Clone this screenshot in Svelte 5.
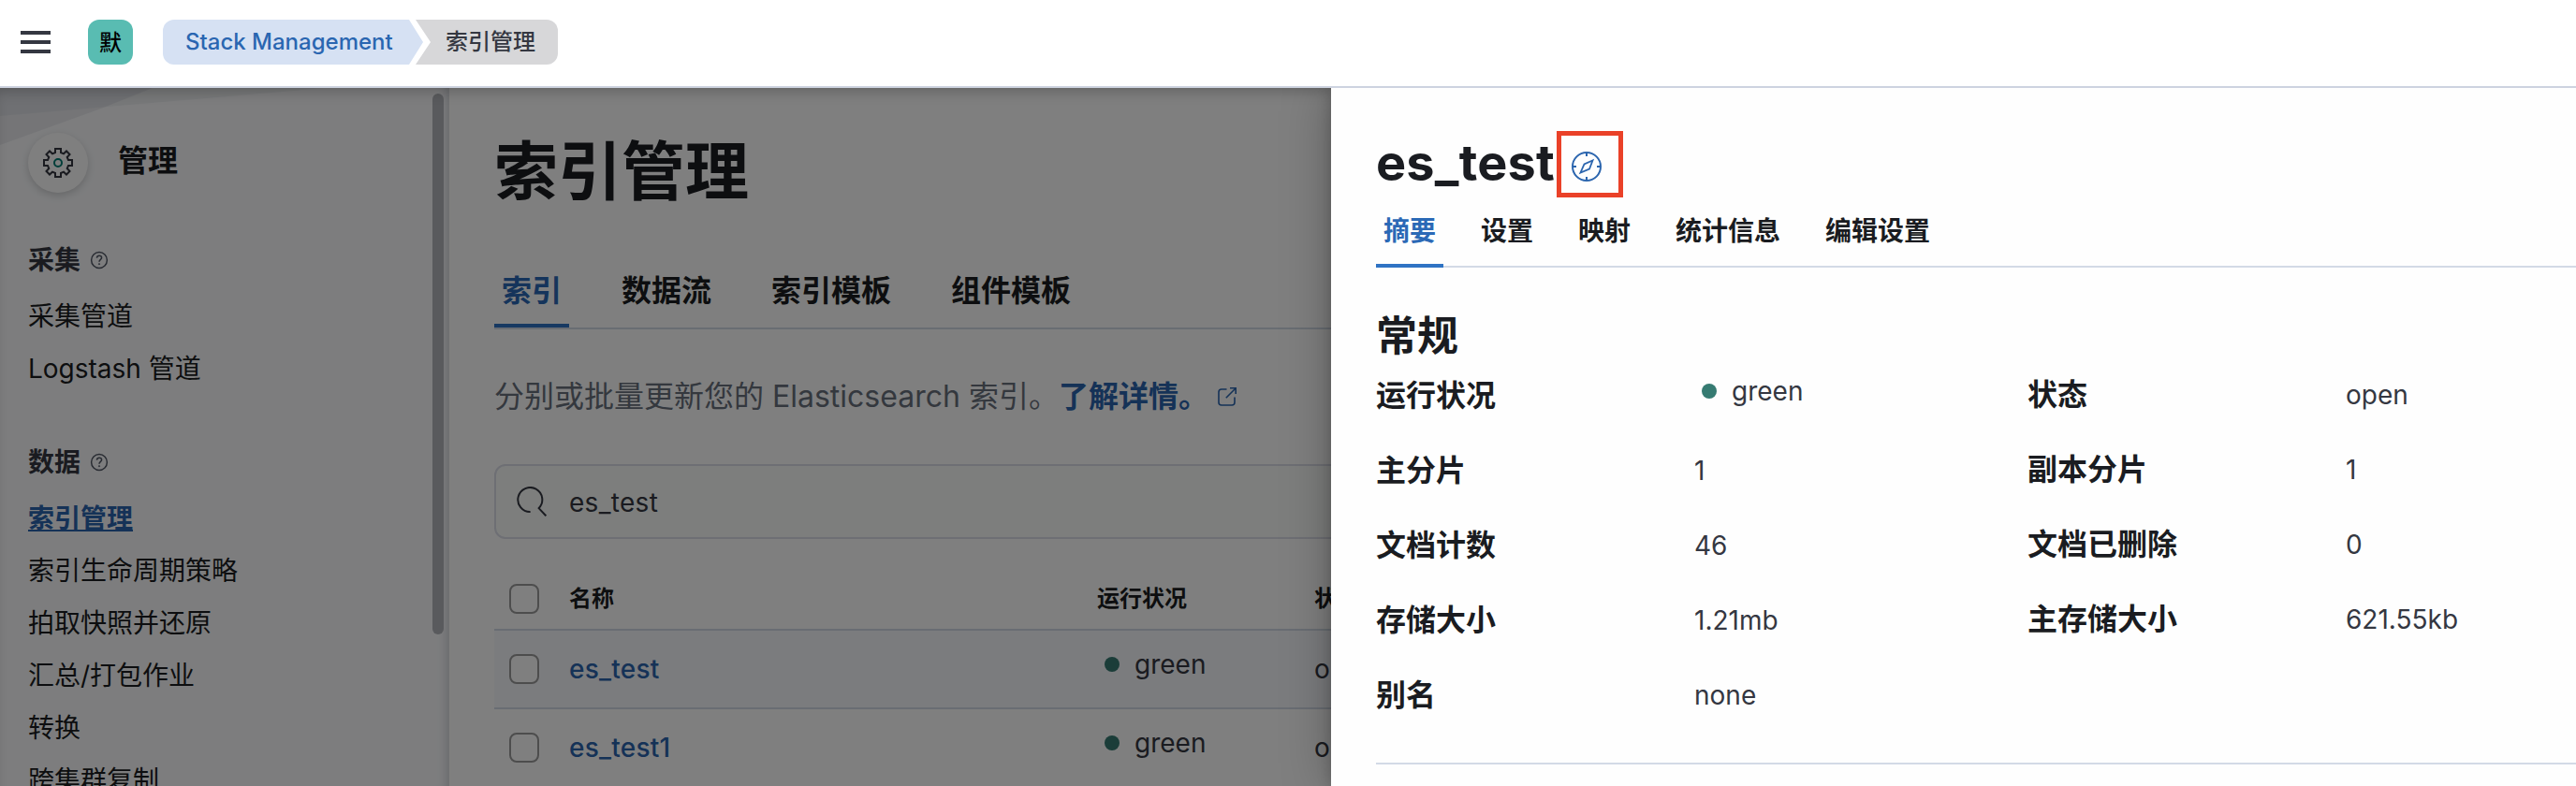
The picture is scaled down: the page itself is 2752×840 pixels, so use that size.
<script>
  const groups = [
    { title: '采集', items: ['采集管道', 'Logstash 管道'] },
    {
      title: '数据',
      items: ['索引管理', '索引生命周期策略', '拍取快照并还原', '汇总/打包作业', '转换', '跨集群复制'],
    },
  ];
  const tabs = ['索引', '数据流', '索引模板', '组件模板'];
  const rows = ['es_test', 'es_test1'];
  const flyoutTabs = ['摘要', '设置', '映射', '统计信息', '编辑设置'];
  const left = [
    ['运行状况', 'green'],
    ['主分片', '1'],
    ['文档计数', '46'],
    ['存储大小', '1.21mb'],
    ['别名', 'none'],
  ];
  const right = [
    ['状态', 'open'],
    ['副本分片', '1'],
    ['文档已删除', '0'],
    ['主存储大小', '621.55kb'],
  ];
</script>

<div class="page">
  <header>
    <div class="burger"><i></i><i></i><i></i></div>
    <div class="avatar">默</div>
    <nav class="crumbs">
      <span class="crumb first">Stack Management</span>
      <span class="crumb last">索引管理</span>
    </nav>
  </header>

  <div class="body">
    <aside>
      <svg class="waves" width="480" height="70" viewBox="0 0 480 70">
        <path d="M0 0H163L108 22L0 61Z" fill="#69707d" opacity=".11" />
        <path d="M0 0H345L314 3L150 17L0 30Z" fill="#69707d" opacity=".08" />
      </svg>
      <div class="side-head">
        <div class="gear">
          <svg width="32" height="32" viewBox="0 0 32 32" fill="none">
            <path
              d="M13 1h6v4l3 1.300 3-2.800 3.500 3.500-2.800 3L27 13h4v6h-4l-1.300 3 2.800 3-3.500 3.500-3-2.800L19 27v4h-6v-4l-3-1.300-3 2.800L3.500 25l2.800-3L5 19H1v-6h4l1.300-3-2.800-3L7 3.500l3 2.800L13 5z"
              stroke="#343741"
              stroke-width="2"
            />
            <circle cx="16" cy="16" r="4" stroke="#017d73" stroke-width="2" />
          </svg>
        </div>
        <strong>管理</strong>
      </div>
      {#each groups as g}
        <section>
          <h4>
            {g.title}
            <svg width="20" height="20" viewBox="0 0 20 20" fill="none" stroke="#535966">
              <circle cx="10" cy="10" r="8.4" stroke-width="1.5" />
              <path d="M7.4 7.6c.2-1.7 1.3-2.3 2.6-2.3s2.6.8 2.6 2.2c0 1.900-2.600 1.900-2.600 4.200" stroke-width="1.5" />
              <circle cx="10" cy="14.200" r=".7" fill="#535966" stroke-width=".6" />
            </svg>
          </h4>
          {#each g.items as item}
            <a class:active={item === '索引管理'}>{item}</a>
          {/each}
        </section>
      {/each}
      <div class="scrollbar"></div>
    </aside>

    <main>
      <h1>索引管理</h1>
      <div class="tabs">
        {#each tabs as t, i}<span class:on={i === 0}>{t}</span>{/each}
      </div>
      <p class="intro">
        <span>分别或批量更新您的 Elasticsearch 索引。</span><b>了解详情。</b>
        <svg width="24" height="24" viewBox="0 0 24 24" fill="none" stroke="#2b65ae" stroke-width="1.6">
          <path d="M11.500 4H6a3 3 0 0 0-3 3v11a3 3 0 0 0 3 3h11a3 3 0 0 0 3-3v-5.500" />
          <path d="M15 2.800h6.200V9M21 3L10.800 13.200" />
        </svg>
      </p>
      <div class="search">
        <svg width="32" height="32" viewBox="0 0 32 32" fill="none" stroke="#343741" stroke-width="2">
          <path d="M14.600 27A13 13 0 1 1 23.600 23.100L31.300 31.300" />
        </svg>
        <span>es_test</span>
      </div>
      <div class="row thead">
        <i class="box"></i><span>名称</span><span>运行状况</span><span>状态</span>
      </div>
      {#each rows as r, i}
        <div class="row" class:hover={i === 0}>
          <i class="box"></i>
          <a>{r}</a>
          <span class="health"><i></i>green</span>
          <span>open</span>
        </div>
      {/each}
    </main>

    <div class="mask"></div>

    <div class="flyout">
      <div class="title">
        <h2>es_test</h2>
        <div class="mark">
          <svg width="32" height="32" viewBox="0 0 32 32" fill="none" stroke="#2b65ae">
            <circle cx="16" cy="16" r="15" stroke-width="2" />
            <path d="M16 1v4M16 27v4M1 16h4M27 16h4" stroke-width="2" />
            <path d="M22.500 9.500L19 18.500L9.500 22.500L13.500 13.500Z" stroke-width="1.800" />
          </svg>
        </div>
      </div>
      <div class="tabs small">
        {#each flyoutTabs as t, i}<span class:on={i === 0}>{t}</span>{/each}
      </div>
      <h3>常规</h3>
      <div class="cols">
        {#each [left, right] as list, n}
          <dl class:second={n === 1}>
            {#each list as [k, v]}
              <dt>{k}</dt>
              {#if v === 'green'}
                <dd><span class="health"><i></i>{v}</span></dd>
              {:else}
                <dd>{v}</dd>
              {/if}
            {/each}
          </dl>
        {/each}
      </div>
      <hr />
    </div>
  </div>
</div>

<style>
  :global(body) {
    background: #fff;
  }
  .page,
  .page * {
    box-sizing: border-box;
  }
  .page {
    width: 2752px;
    height: 840px;
    overflow: hidden;
    display: flex;
    flex-direction: column;
    font-family: Inter, 'Noto Sans CJK SC', sans-serif;
    font-size: 28px;
    color: #343741;
    white-space: nowrap;
  }
  h1, h2, h3, h4, p, dl, dd, hr {
    margin: 0;
  }
  header {
    height: 94px;
    flex: none;
    padding: 0 22px 2px;
    display: flex;
    align-items: center;
    border-bottom: 2px solid #cdd3e0;
    background: #fff;
  }
  .burger {
    width: 32px;
    display: flex;
    flex-direction: column;
    gap: 6px;
  }
  .burger i {
    height: 4px;
    background: #343741;
  }
  .avatar {
    width: 48px;
    height: 48px;
    margin: 0 32px 0 40px;
    border-radius: 12px;
    background: #59bcb2;
    color: #000;
    font-size: 24px;
    font-weight: 500;
    line-height: 50px;
    text-align: center;
  }
  .crumbs {
    display: flex;
    font-size: 24px;
    font-weight: 500;
    line-height: 48px;
  }
  .crumb {
    height: 48px;
  }
  .first {
    width: 278px;
    padding-left: 24px;
    border-radius: 12px 0 0 12px;
    background: #d6e1f3;
    color: #2a66b1;
    clip-path: polygon(0 0, 263px 0, 100% 50%, 263px 100%, 0 100%);
  }
  .last {
    width: 152px;
    margin-left: -8px;
    padding-left: 32px;
    border-radius: 0 12px 12px 0;
    background: #d7d7d9;
    clip-path: polygon(0 0, 100% 0, 100% 100%, 0 100%, 16px 50%);
  }
  .body {
    flex: 1;
    display: flex;
    min-height: 0;
    position: relative;
  }
  aside {
    width: 480px;
    flex: none;
    padding: 48px 30px 0;
    position: relative;
    background: #fafbfd;
    box-shadow: inset -12px 0 10px -8px rgba(90, 95, 110, 0.22);
  }
  .waves {
    position: absolute;
    left: 0;
    top: 0;
  }
  .side-head {
    display: flex;
    align-items: center;
    gap: 32px;
    position: relative;
    margin-bottom: 44px;
  }
  .side-head strong {
    font-size: 32px;
    line-height: 40px;
    margin-top: -4px;
    color: #1a1c21;
  }
  .gear {
    width: 64px;
    height: 64px;
    border-radius: 50%;
    background: #fff;
    display: grid;
    place-items: center;
    box-shadow: 0 3px 8px rgba(0, 0, 0, 0.18);
  }
  section {
    margin-bottom: 44px;
  }
  h4 {
    height: 60px;
    line-height: 56px;
    font-size: 28px;
    font-weight: 700;
    display: flex;
    gap: 10px;
  }
  h4 svg {
    margin-top: 18px;
  }
  aside a {
    display: block;
    line-height: 56px;
    color: #1a1c21;
  }
  aside a.active {
    color: #2b65ae;
    font-weight: 700;
    text-decoration: underline;
    text-decoration-thickness: 2px;
    text-underline-offset: 2px;
  }
  .scrollbar {
    position: absolute;
    left: 462px;
    top: 6px;
    width: 12px;
    height: 578px;
    border-radius: 6px;
    background: #b3b5bb;
  }
  main {
    flex: 1;
    min-width: 0;
    padding: 48px 48px 0;
    background: #fff;
  }
  h1 {
    font-size: 68px;
    line-height: 82px;
    font-weight: 700;
    color: #1a1c21;
  }
  .tabs {
    height: 82px;
    margin-top: 46px;
    display: flex;
    gap: 48px;
    box-shadow: inset 0 -2px #d3dae6;
    font-size: 32px;
    font-weight: 700;
    color: #1a1c21;
  }
  .tabs span {
    height: 80px;
    padding: 0 8px;
    line-height: 81px;
  }
  .tabs .on {
    color: #2b69b6;
    border-bottom: 4px solid #2f73c4;
  }
  .intro {
    margin-top: 48px;
    height: 48px;
    line-height: 48px;
    display: flex;
    align-items: center;
    font-size: 32px;
    color: #69707d;
  }
  .intro b {
    color: #2b65ae;
  }
  .intro svg {
    margin-left: 8px;
  }
  .search {
    margin-top: 48px;
    height: 80px;
    padding-left: 22px;
    display: flex;
    align-items: center;
    gap: 24px;
    border: 2px solid #dcdee8;
    border-radius: 12px;
    background: #fafdfb;
    letter-spacing: 0.3px;
  }
  .search span {
    padding-top: 2px;
  }
  .row {
    height: 84px;
    display: grid;
    grid-template-columns: 64px 564px 232px 1fr;
    align-items: center;
    padding: 0 16px;
    border-bottom: 2px solid #d3dae6;
    line-height: 34px;
  }
  .thead {
    height: 66px;
    margin-top: 32px;
    font-size: 24px;
    font-weight: 700;
    color: #1a1c21;
  }
  .hover {
    background: #f6f8fc;
  }
  .row a {
    color: #2b65ae;
    font-weight: 500;
    letter-spacing: 0.25px;
  }
  .box {
    width: 32px;
    height: 32px;
    border: 2px solid #9a9a9a;
    border-radius: 8px;
    background: #fff;
  }
  .health {
    display: flex;
    align-items: center;
    padding-left: 8px;
    gap: 16px;
    position: relative;
    top: -5px;
  }
  .health i {
    width: 16px;
    height: 16px;
    border-radius: 50%;
    background: #367b72;
  }
  .mask {
    position: absolute;
    inset: 0;
    background: rgba(0, 0, 0, 0.5);
    box-shadow: inset 0 10px 14px -6px rgba(0, 0, 0, 0.22);
  }
  .flyout {
    position: absolute;
    left: 1422px;
    top: 0;
    right: 0;
    bottom: 0;
    padding: 46px 0 0 48px;
    background: #fefefe;
    box-shadow: 0 0 50px rgba(0, 0, 0, 0.28), 0 0 14px rgba(0, 0, 0, 0.2);
    clip-path: inset(0 0 0 -100px);
  }
  .title {
    display: flex;
    height: 72px;
  }
  h2 {
    width: 193px;
    font-size: 54px;
    line-height: 68px;
    color: #1a1c21;
    letter-spacing: 0.2px;
  }
  .mark {
    width: 71px;
    height: 71px;
    border: 5px solid #ea4128;
    padding: 17px 0 0 11px;
  }
  .small {
    margin-top: 0;
    height: 74px;
    gap: 32px;
    font-size: 28px;
  }
  .small span {
    height: 74px;
    line-height: 70px;
  }
  h3 {
    margin-top: 45px;
    font-size: 44px;
    line-height: 56px;
    color: #1a1c21;
  }
  .cols {
    display: grid;
    grid-template-columns: 696px 1fr;
    margin-top: -4px;
  }
  dl {
    display: grid;
    grid-template-columns: 340px 1fr;
    grid-auto-rows: 80px;
    line-height: 80px;
    align-content: start;
  }
  .second {
    margin-top: -1px;
  }
  dt {
    font-size: 32px;
    font-weight: 700;
    color: #1a1c21;
  }
  hr {
    border: 0;
    margin-top: 32px;
    height: 2px;
    background: #d3dae6;
  }
</style>
